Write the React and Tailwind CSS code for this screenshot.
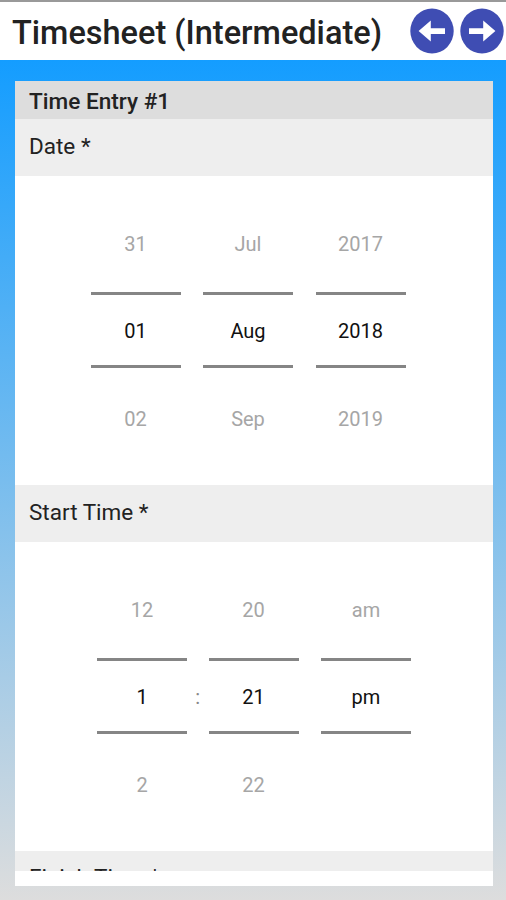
import React from 'react';

const dateColumns = [
  { prev: '31', current: '01', next: '02' },
  { prev: 'Jul', current: 'Aug', next: 'Sep' },
  { prev: '2017', current: '2018', next: '2019' },
];

const ArrowButton = ({ label, flip }) => (
  <button aria-label={label} className="h-[46px] w-[44px] shrink-0">
    <svg viewBox="0 0 44 46" className={flip ? 'h-full w-full -scale-x-100' : 'h-full w-full'}>
      <ellipse cx="22" cy="23" rx="21.7" ry="22.5" fill="#3f4db3" />
      <path d="M8.6 23 L20.8 12.6 V20.2 H35 V25.9 H20.8 V33.4 Z" fill="#fff" />
    </svg>
  </button>
);

const FieldHeader = ({ children, clipped }) => (
  <div
    className={`h-[57px] shrink-0 bg-[#eeeeee] pl-[14px] text-[22.5px] leading-8 text-[#222] ${
      clipped ? 'pt-[10px]' : 'pt-[11px]'
    }`}
  >
    {children}
  </div>
);

const Wheel = ({ prev, current, next }) => (
  <div className="w-[90px] text-center text-[20px]">
    <div className="flex h-24 items-center justify-center text-[#a6a6a6]">{prev}</div>
    <div className="flex h-[76px] items-center justify-center border-y-3 border-[#858585] pt-0.5 text-[#111]">
      {current}
    </div>
    <div className="flex h-[102px] items-center justify-center text-[#a6a6a6]">{next}</div>
  </div>
);

const App = () => {
  return (
    <div className="flex h-[900px] w-[506px] flex-col overflow-hidden bg-white font-['Roboto','Liberation_Sans',sans-serif]">
      <header className="flex h-[60px] shrink-0 items-center justify-between border-t-2 border-[#999] pl-[12px] pr-[2px]">
        <h1 className="whitespace-nowrap pt-1 text-[32.5px] font-medium text-[#222]">Timesheet (Intermediate)</h1>
        <div className="flex gap-[6px]">
          <ArrowButton label="Previous" />
          <ArrowButton label="Next" flip />
        </div>
      </header>

      <main className="flex flex-1 flex-col bg-linear-to-b/srgb from-[#149dff] to-[#dddddd] pb-[14px] pl-[15px] pr-[13px] pt-[21px]">
        <div className="flex h-[805px] flex-col bg-white pb-[15px]">
          <div className="flex min-h-0 flex-1 flex-col overflow-hidden">
            <h2 className="h-[38px] shrink-0 bg-[#dddddd] pl-[14px] pt-[5px] text-[22.6px] font-medium leading-8 text-[#222]">
              Time Entry #1
            </h2>

            <FieldHeader>Date *</FieldHeader>
            <div className="flex h-[309px] shrink-0 gap-[22.5px] pl-[75.5px] pt-5">
              {dateColumns.map((col) => (
                <Wheel key={col.current} {...col} />
              ))}
            </div>

            <FieldHeader>Start Time *</FieldHeader>
            <div className="flex h-[309px] shrink-0 pl-[82px] pt-5">
              <Wheel prev="12" current="1" next="2" />
              <div className="flex w-[21.5px] justify-center pt-[120px] text-[20px] text-[#888]">:</div>
              <Wheel prev="20" current="21" next="22" />
              <div className="w-[22.5px]" />
              <Wheel prev="am" current="pm" next="" />
            </div>

            <FieldHeader clipped>Finish Time *</FieldHeader>
          </div>
        </div>
      </main>
    </div>
  );
};

export default App;
